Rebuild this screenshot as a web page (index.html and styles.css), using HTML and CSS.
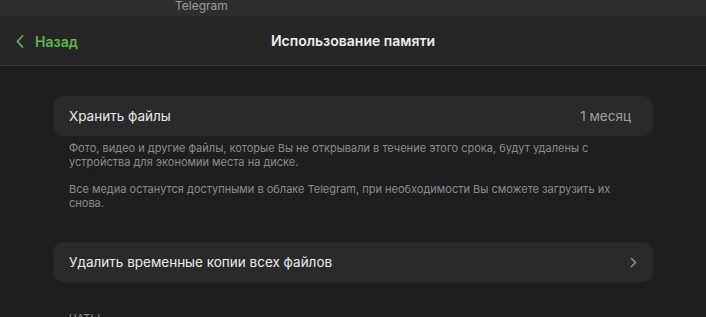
FILE: index.html
```html
<!DOCTYPE html>
<html lang="ru">
<head>
<meta charset="utf-8">
<link rel="stylesheet" href="styles.css">
</head>
<body>
<div class="window">
  <div class="titlebar"><span class="app-name">Telegram</span></div>
  <header class="nav">
    <a class="back">
      <svg class="back-icon" width="8" height="13" viewBox="0 0 8 13"><path d="M6.5 1 L1.5 6.5 L6.5 12" fill="none" stroke="#5bb84a" stroke-width="1.8" stroke-linecap="round" stroke-linejoin="round"/></svg>
      <span>Назад</span>
    </a>
    <h1 class="nav-title">Использование памяти</h1>
  </header>
  <main class="content">
    <div class="card">
      <span class="card-label">Хранить файлы</span>
      <span class="card-value">1 месяц</span>
    </div>
    <div class="note">
      <p>Фото, видео и другие файлы, которые Вы не открывали в течение этого срока, будут удалены с устройства для экономии места на диске.</p>
      <p>Все медиа останутся доступными в облаке Telegram, при необходимости Вы сможете загрузить их снова.</p>
    </div>
    <div class="card card-link">
      <span class="card-label">Удалить временные копии всех файлов</span>
      <svg class="chevron" width="7" height="11" viewBox="0 0 7 11"><path d="M1.5 1.5 L5.5 5.5 L1.5 9.5" fill="none" stroke="#8e8e8e" stroke-width="1.6" stroke-linecap="round" stroke-linejoin="round"/></svg>
    </div>
    <div class="section-head">ЧАТЫ</div>
  </main>
</div>
</body>
</html>
```

FILE: styles.css
```css
* { box-sizing: border-box; }
html, body { margin: 0; padding: 0; }
body {
  width: 706px;
  height: 317px;
  overflow: hidden;
  background: #1e1e1e;
  font-family: Inter, "Noto Sans", sans-serif;
  -webkit-font-smoothing: antialiased;
}
.window { display: flex; flex-direction: column; height: 317px; }
.titlebar {
  flex: 0 0 16px;
  height: 16px;
  background: #2e2e2e;
  display: flex;
  align-items: flex-start;
  padding-left: 175px;
  overflow: hidden;
}
.app-name {
  color: #9b9b9b;
  font-size: 12px;
  line-height: 12px;
}
.nav {
  flex: 0 0 50px;
  height: 50px;
  background: #262626;
  border-bottom: 1px solid #3a3a3a;
  display: flex;
  align-items: center;
  position: relative;
}
.back {
  display: flex;
  align-items: center;
  gap: 11px;
  padding-left: 16px;
  color: #5bb84a;
  font-size: 14px;
  font-weight: 600;
  padding-top: 1px;
}
.back-icon { display: block; }
.nav-title {
  margin: 0;
  position: absolute;
  left: 0;
  right: 0;
  top: 16px;
  text-align: center;
  font-size: 14px;
  font-weight: 600;
  color: #ececec;
  line-height: 18px;
  pointer-events: none;
}
.content {
  flex: 0 0 auto;
  padding: 30px 53px 0 53px;
  display: flex;
  flex-direction: column;
}
.card {
  flex: 0 0 40px;
  height: 40px;
  background: #2a2a2a;
  border-radius: 10px;
  display: flex;
  align-items: center;
  justify-content: space-between;
  padding: 0 22px 0 16px;
}
.card-label { color: #ececec; font-size: 13.5px; }
.card-value { color: #a0a0a0; font-size: 13.5px; }
.card-link { padding-right: 16px; margin-top: 32px; }
.chevron { display: block; }
.note {
  padding: 5px 16px 0 16px;
  color: #8c8c8c;
  font-size: 11px;
  line-height: 14px;
}
.note p { margin: 0 0 13px 0; }
.note p:last-child { margin-bottom: 0; }
.section-head {
  margin-top: 29px;
  padding-left: 16px;
  color: #8c8c8c;
  font-size: 11px;
}
```
